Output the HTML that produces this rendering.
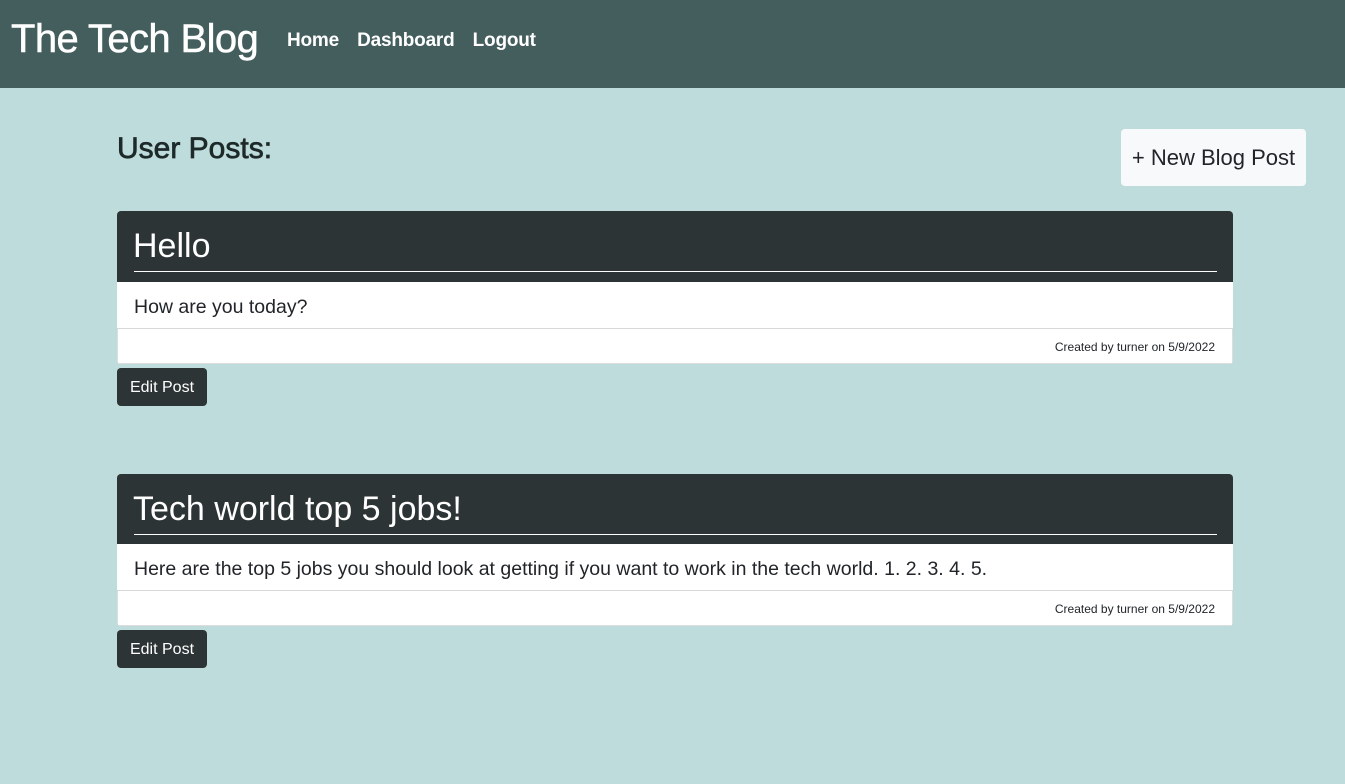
<!DOCTYPE html>
<html><head><style>
*{margin:0;padding:0;box-sizing:border-box}
body{width:1345px;height:784px;background:#bfdcdc;font-family:"Liberation Sans",sans-serif;position:relative;overflow:hidden;color:#212529}
.nav{position:absolute;left:0;top:0;width:1345px;height:88px;background:#445e5e;color:#fff}
.brand{position:absolute;left:11px;top:17px;font-size:40px;letter-spacing:-0.6px;-webkit-text-stroke:0.5px #fff}
.links{position:absolute;left:287px;top:30px;font-size:19px;font-weight:bold;letter-spacing:-0.2px}
.links span{margin-right:13px}
h2{position:absolute;left:117px;top:132px;font-size:30px;font-weight:normal;color:#1e2a2a;-webkit-text-stroke:0.7px #1e2a2a}
.nb{position:absolute;left:1121px;top:129px;width:185px;height:57px;background:#f8f9fa;border-radius:4px;font-size:22px;line-height:57px;text-align:center;color:#212529}
.card{position:absolute;left:117px;width:1116px;border-radius:4px;overflow:hidden}
.hd{height:71px;background:#2d3435;color:#fff;position:relative}
.hd div{position:absolute;left:16px;top:16px;font-size:34px}
.hd i{position:absolute;left:17px;right:16px;top:60px;height:1px;background:#fff}
.bd{height:47px;background:#fff;border-bottom:1px solid #d8d8d8;font-size:19.5px;padding:14px 17px}
.ft{height:35px;background:#fff;font-size:12px;text-align:right;padding:11px 17px;border:1px solid #ddd;border-top:none}
.btn{position:absolute;left:117px;width:90px;height:38px;background:#2d3435;color:#fff;border-radius:4px;font-size:16px;line-height:40px;text-align:center}
</style></head><body>
<div class="nav"><div class="brand">The Tech Blog</div><div class="links"><span>Home</span> <span>Dashboard</span> <span>Logout</span></div></div>
<h2>User Posts:</h2>
<div class="nb">+ New Blog Post</div>
<div class="card" style="top:211px"><div class="hd"><div>Hello</div><i></i></div><div class="bd">How are you today?</div><div class="ft">Created by turner on 5/9/2022</div></div>
<div class="btn" style="top:368px">Edit Post</div>
<div class="card" style="top:474px"><div class="hd" style="height:70px"><div>Tech world top 5 jobs!</div><i></i></div><div class="bd">Here are the top 5 jobs you should look at getting if you want to work in the tech world. 1. 2. 3. 4. 5.</div><div class="ft">Created by turner on 5/9/2022</div></div>
<div class="btn" style="top:630px">Edit Post</div>
</body></html>
